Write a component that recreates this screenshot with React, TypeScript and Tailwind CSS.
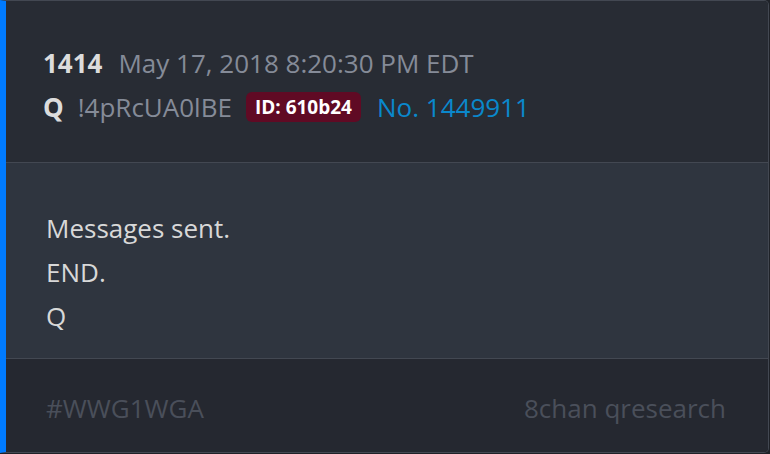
import React from 'react';

const Post: React.FC = () => {
    return (
        <div className="w-[770px] h-[454px] bg-[#1f2228]" style={{ fontFamily: '"Open Sans", sans-serif' }}>
            <div className="w-[769px] h-[453px] flex flex-col border border-[#434852] border-l-[6px] border-l-[#007bff] rounded-r-[5px] overflow-hidden">
                <div className="bg-[#282c34] pl-[37px] pt-[40px] pb-[33px] border-b border-[#434852] text-[26px] leading-[44px]">
                    <div className="flex items-center">
                        <span className="font-bold text-[#dcdcdc]">1414</span>
                        <span className="ml-[16px] text-[#858b98]">May 17, 2018 8:20:30 PM EDT</span>
                    </div>
                    <div className="flex items-center">
                        <span className="font-bold text-[#dcdcdc]">Q</span>
                        <span className="ml-[14px] text-[#858b98]">!4pRcUA0lBE</span>
                        <span className="ml-[14px] bg-[#600a24] text-white font-bold text-[19px] leading-[30px] px-[9px] rounded-[6px]">ID: 610b24</span>
                        <span className="ml-[16px] text-[#0a88cc]">No. 1449911</span>
                    </div>
                </div>
                <div className="bg-[#2f353f] pl-[40px] pt-[43px] pb-[20px] border-b border-[#434852] text-[26px] leading-[44px] text-[#d8d8d8]">
                    <div>Messages sent.</div>
                    <div>END.</div>
                    <div>Q</div>
                </div>
                <div className="flex-1 bg-[#252830] pl-[40px] pr-[42px] pt-[27px] flex justify-between text-[26px] leading-[44px] text-[#4a4f5a]">
                    <span>#WWG1WGA</span>
                    <span>8chan qresearch</span>
                </div>
            </div>
        </div>
    );
};

export default function App() {
    return <Post />;
}
